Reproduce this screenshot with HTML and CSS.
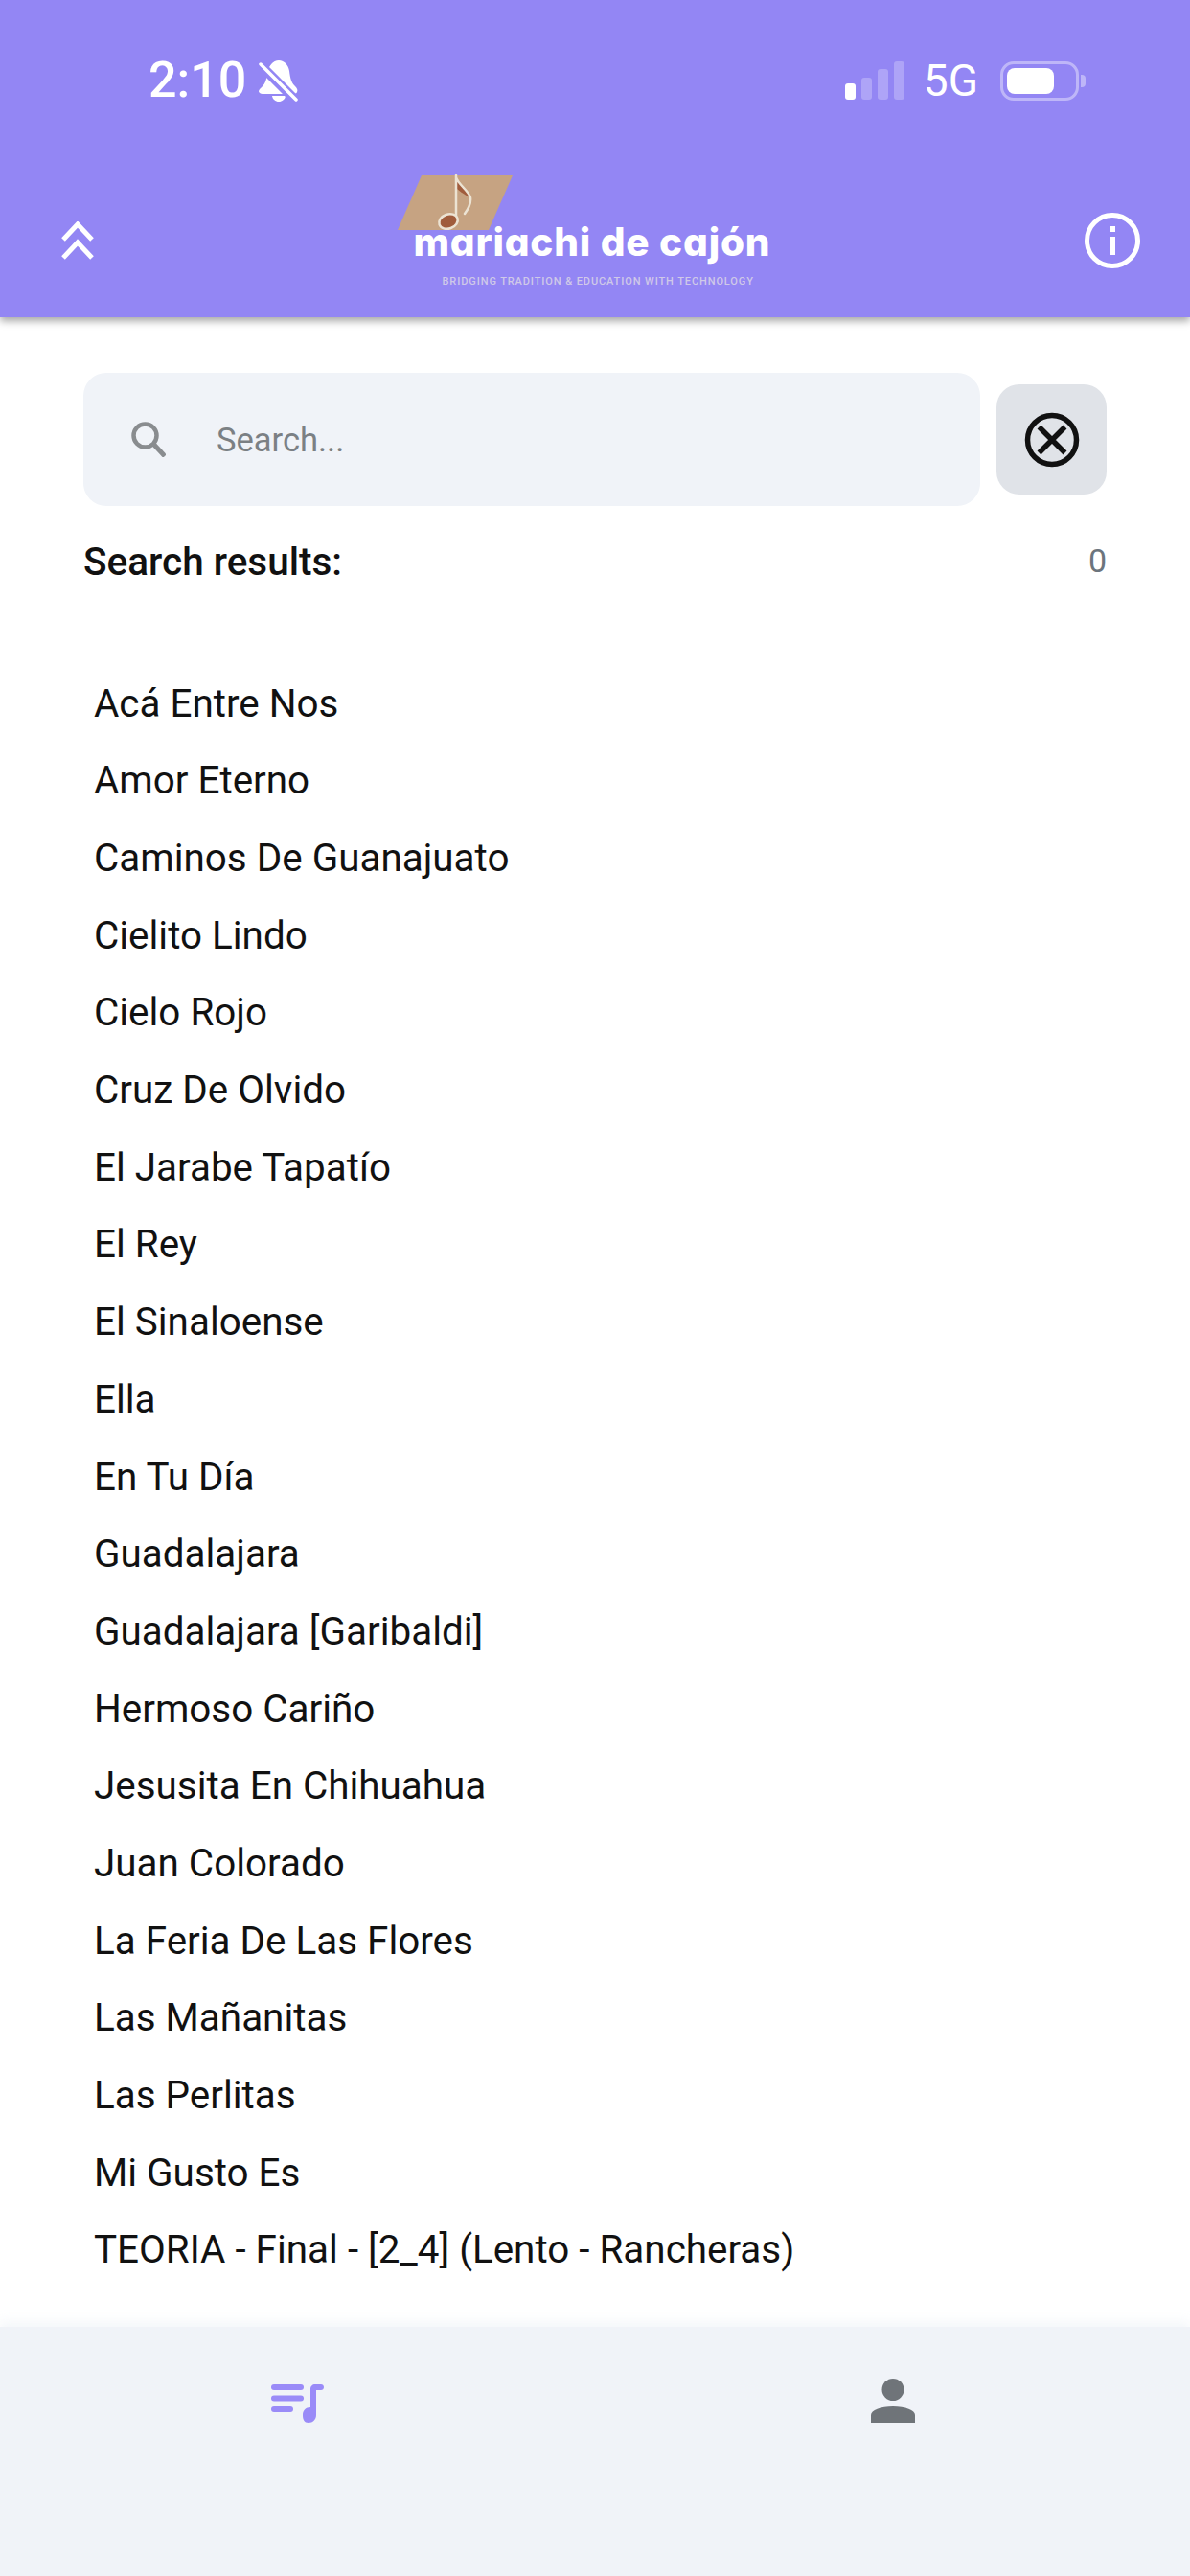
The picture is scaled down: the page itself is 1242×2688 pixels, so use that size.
FILE: index.html
```html
<!DOCTYPE html>
<html lang="en">

<head>
  <meta charset="UTF-8" />
  <meta name="viewport" content="width=device-width, initial-scale=1.0" />
  <title>Mariachi de Cajón</title>
  <link rel="stylesheet" href="styles.css">
</head>

<body>
  <header class="header">
    <div class="status">
      <div class="status-left">
        <span class="time">2:10</span>
        <svg class="bell" viewBox="0 0 41 43" width="41" height="43">
          <path fill="#fff" d="M21 0C27 0 31 5 32 11 33 19 34 23 38 27 40 29 41 31 40 33 39.500 34.500 38 35 36 35H4C2 35 .5 34 0 32.500 0 30.500 2 29 4 27 7 24 8 20 9 14 10 6 15 0 21 0zM14 37H28C27.500 40.500 24.500 43 21 43S14.500 40.500 14 37z" />
          <path stroke="#9386f4" stroke-width="10" d="M-2 1 41 44" />
          <path stroke="#fff" stroke-width="3.500" stroke-linecap="round" d="M2 4 39 41" />
        </svg>
      </div>
      <div class="status-right">
        <div class="signal">
          <i class="bar bar-on"></i>
          <i class="bar bar-2"></i>
          <i class="bar bar-3"></i>
          <i class="bar bar-4"></i>
        </div>
        <span class="network">5G</span>
        <div class="battery">
          <div class="battery-body"><div class="battery-fill"></div></div>
          <div class="battery-nub"></div>
        </div>
      </div>
    </div>

    <nav class="nav">
      <svg class="chevrons" viewBox="0 0 34 40" width="34" height="40">
        <path fill="none" stroke="#fff" stroke-width="5" d="M2 19 17 3 32 19M2 38 17 22 32 38" />
      </svg>

      <div class="logo">
        <svg class="logo-mark" viewBox="0 0 120 60" width="120" height="60">
          <polygon fill="#c6a382" points="25,1 120,1 95,58 0,58" />
          <path fill="#a05c3c" d="M61 4C63 10 74 17 76 24 69 21 63 16 61 14z" />
          <path fill="none" stroke="#ece3d3" stroke-width="2.500" stroke-linecap="round" d="M61 1V50M61 3C63 10 74 17 76 24 77 31 73 37 70 41" />
          <ellipse cx="53" cy="49" rx="10" ry="7.500" transform="rotate(-20 53 49)" fill="#a05c3c" stroke="#ece3d3" stroke-width="2.500" />
        </svg>
        <div class="logo-name">mariachi de cajón</div>
        <div class="logo-tag">BRIDGING TRADITION &amp; EDUCATION WITH TECHNOLOGY</div>
      </div>

      <svg class="info" viewBox="0 0 58 58" width="58" height="58">
        <circle cx="29" cy="29" r="26.500" fill="none" stroke="#fff" stroke-width="5" />
        <rect x="26" y="14" width="6" height="6" fill="#fff" />
        <rect x="26" y="25" width="6" height="19" fill="#fff" />
      </svg>
    </nav>
  </header>

  <main class="content">
    <div class="search-row">
      <div class="search-box">
        <svg class="search-icon" viewBox="0 0 36 37" width="36" height="37">
          <circle cx="14.500" cy="14.500" r="12" fill="none" stroke="#898c8f" stroke-width="4.500" />
          <path stroke="#898c8f" stroke-width="5" d="M23 23 35 36" />
        </svg>
        <span class="search-placeholder">Search...</span>
      </div>
      <div class="clear-btn">
        <svg viewBox="0 0 58 58" width="58" height="58">
          <circle cx="29" cy="29" r="25.500" fill="none" stroke="#111" stroke-width="5.500" />
          <path stroke="#111" stroke-width="5.500" d="M15.500 15.500 42.500 42.500M42.500 15.500 15.500 42.500" />
        </svg>
      </div>
    </div>

    <div class="results-row">
      <span class="results-label">Search results:</span>
      <span class="results-count">0</span>
    </div>

    <ul class="songs">
      <li>Acá Entre Nos</li>
      <li>Amor Eterno</li>
      <li>Caminos De Guanajuato</li>
      <li>Cielito Lindo</li>
      <li>Cielo Rojo</li>
      <li>Cruz De Olvido</li>
      <li>El Jarabe Tapatío</li>
      <li>El Rey</li>
      <li>El Sinaloense</li>
      <li>Ella</li>
      <li>En Tu Día</li>
      <li>Guadalajara</li>
      <li>Guadalajara [Garibaldi]</li>
      <li>Hermoso Cariño</li>
      <li>Jesusita En Chihuahua</li>
      <li>Juan Colorado</li>
      <li>La Feria De Las Flores</li>
      <li>Las Mañanitas</li>
      <li>Las Perlitas</li>
      <li>Mi Gusto Es</li>
      <li>TEORIA - Final - [2_4] (Lento - Rancheras)</li>
    </ul>
  </main>

  <footer class="tabs">
    <div class="tab">
      <svg viewBox="0 0 55 40" width="55" height="40">
        <g fill="#9a8bf8">
          <rect x="0" y="0" width="34" height="6" rx="3" />
          <rect x="0" y="11.500" width="34" height="6" rx="3" />
          <rect x="0" y="23" width="23" height="6" rx="3" />
          <path d="M41 5c0-3 2-5 5-5h6c1.700 0 3 1.300 3 3s-1.300 3-3 3h-5v26c0 4.500-3.500 8-8 8s-6-3.500-6-8 3-8 8-8z" />
        </g>
      </svg>
    </div>
    <div class="tab">
      <svg viewBox="0 0 46 46" width="46" height="46">
        <g fill="#6f7479">
          <ellipse cx="23" cy="11.500" rx="11.500" ry="11.500" />
          <path d="M0 46V38C0 33 10 29 23 29S46 33 46 38V46z" />
        </g>
      </svg>
    </div>
  </footer>
</body>

</html>
```

FILE: styles.css
```css
* {
  margin: 0;
  padding: 0;
  box-sizing: border-box;
}

html, body {
  width: 1242px;
  height: 2688px;
  overflow: hidden;
  background: #fff;
  font-family: Roboto, "Noto Sans", sans-serif;
}

body {
  display: flex;
  flex-direction: column;
}

.header {
  height: 331px;
  background: #9386f4;
  color: #fff;
  box-shadow: 0 4px 8px rgba(0, 0, 0, 0.35);
  position: relative;
  z-index: 2;
}

.status {
  display: flex;
  justify-content: space-between;
  align-items: center;
  height: 171px;
  padding: 50px 109px 53px 155px;
}

.status-left {
  display: flex;
  align-items: center;
  gap: 13px;
}

.time {
  font-size: 52px;
  font-weight: 500;
  line-height: 68px;
}

.status-right {
  display: flex;
  align-items: center;
}

.signal {
  display: flex;
  align-items: flex-end;
  gap: 6px;
  height: 40px;
  margin-right: 20px;
}

.bar {
  display: block;
  width: 11px;
  border-radius: 3px;
  background: rgba(255, 255, 255, 0.25);
}

.bar-on {
  height: 17px;
  background: #fff;
}

.bar-2 {
  height: 23px;
}

.bar-3 {
  height: 32px;
}

.bar-4 {
  height: 40px;
}

.network {
  font-size: 46px;
  font-weight: 400;
  line-height: 52px;
  margin-right: 23px;
}

.battery {
  display: flex;
  align-items: center;
  gap: 2px;
}

.battery-body {
  width: 82px;
  height: 41px;
  padding: 4px;
  border: 3px solid rgba(255, 255, 255, 0.4);
  border-radius: 14px;
}

.battery-fill {
  width: 49px;
  height: 100%;
  border-radius: 8px;
  background: #fff;
}

.battery-nub {
  width: 5px;
  height: 13px;
  border-radius: 0 4px 4px 0;
  background: rgba(255, 255, 255, 0.4);
}

.nav {
  display: flex;
  justify-content: space-between;
  align-items: center;
  height: 160px;
  padding: 0 52px 0 64px;
}

.logo {
  position: relative;
  width: 401px;
  height: 138px;
  padding: 47px 0 0 17px;
}

.logo-mark {
  position: absolute;
  top: 0;
  left: 0;
}

.logo-name {
  font-family: Inter, Lato, sans-serif;
  font-feature-settings: "cv11";
  font-size: 40.500px;
  font-weight: 800;
  line-height: 48px;
  letter-spacing: 0.8px;
  white-space: nowrap;
  position: relative;
}

.logo-tag {
  margin: 10px 0 0 30px;
  font-size: 11px;
  font-weight: 500;
  line-height: 13px;
  letter-spacing: 0.9px;
  color: #cfc9e8;
  white-space: nowrap;
}

.content {
  flex: 1;
  padding: 58px 87px 0;
}

.search-row {
  display: flex;
  align-items: center;
  gap: 17px;
}

.search-box {
  flex: 1;
  display: flex;
  align-items: center;
  gap: 53px;
  height: 139px;
  padding-left: 50px;
  border-radius: 24px;
  background: #f0f3f8;
}

.search-placeholder {
  font-size: 34.500px;
  color: #7b8084;
}

.clear-btn {
  display: flex;
  justify-content: center;
  align-items: center;
  width: 115px;
  height: 115px;
  border-radius: 24px;
  background: #e0e3e8;
}

.results-row {
  display: flex;
  justify-content: space-between;
  align-items: center;
  height: 40px;
  margin-top: 38px;
}

.results-label {
  font-size: 40.500px;
  font-weight: 500;
  color: #111;
}

.results-count {
  margin-bottom: 2px;
  font-size: 34px;
  color: #6c757d;
}

.songs {
  list-style: none;
  margin-top: 88.650px;
  padding-left: 11px;
}

.songs li {
  height: 80.700px;
  line-height: 80.700px;
  font-size: 40.400px;
  color: #111;
  white-space: nowrap;
}

.tabs {
  display: flex;
  height: 260px;
  padding-top: 54px;
  background: #f0f3f8;
  box-shadow: 0 -6px 10px rgba(240, 243, 248, 0.7);
  position: relative;
}

.tab {
  flex: 1;
  display: flex;
  justify-content: center;
  align-items: flex-end;
  height: 46px;
}
```
